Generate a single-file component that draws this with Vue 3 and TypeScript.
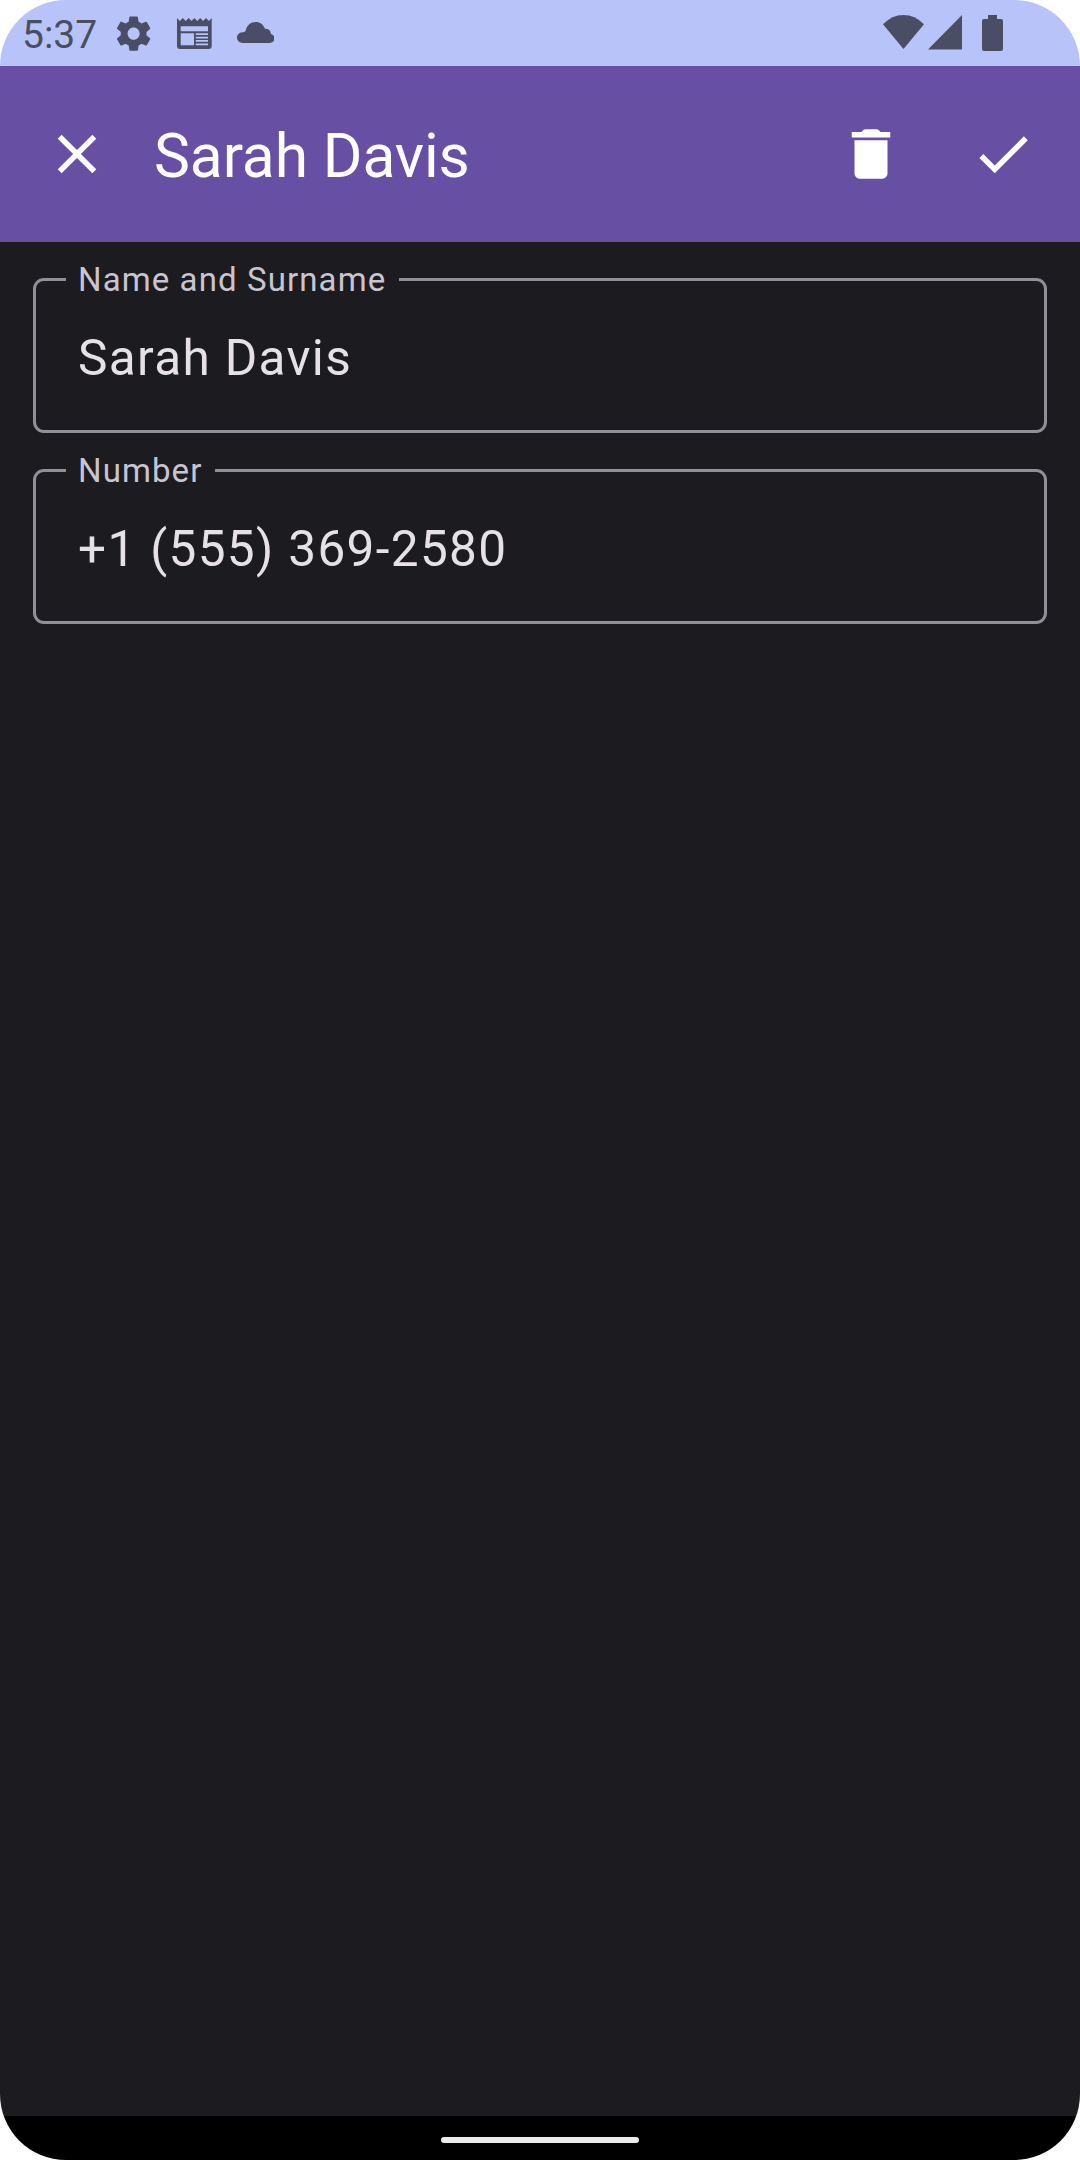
<script setup lang="ts">
import { ref } from 'vue'

interface Field {
  id: string
  label: string
  value: string
}

const title = ref('Sarah Davis')
const fields = ref<Field[]>([
  { id: 'name', label: 'Name and Surname', value: 'Sarah Davis' },
  { id: 'number', label: 'Number', value: '+1 (555) 369-2580' },
])
</script>

<template>
  <div class="screen">
    <header class="status">
      <span class="clock">5:37</span>
      <svg class="gear" viewBox="0 0 24 24" aria-hidden="true">
        <path d="M19.43 12.98c.04-.32.07-.64.07-.98s-.03-.66-.07-.98l2.11-1.65c.19-.15.24-.42.12-.64l-2-3.46c-.12-.22-.39-.3-.61-.22l-2.49 1c-.52-.4-1.08-.73-1.69-.98l-.38-2.65C14.46 2.18 14.25 2 14 2h-4c-.25 0-.46.18-.49.42l-.38 2.65c-.61.25-1.17.59-1.69.98l-2.49-1c-.23-.09-.49 0-.61.22l-2 3.46c-.13.22-.07.49.12.64l2.11 1.65c-.04.32-.07.65-.07.98s.03.66.07.98l-2.11 1.65c-.19.15-.24.42-.12.64l2 3.46c.12.22.39.3.61.22l2.49-1c.52.4 1.08.73 1.69.98l.38 2.65c.03.24.24.42.49.42h4c.25 0 .46-.18.49-.42l.38-2.65c.61-.25 1.17-.59 1.69-.98l2.49 1c.23.09.49 0 .61-.22l2-3.46c.12-.22.07-.49-.12-.64l-2.11-1.65zM12 15.5c-1.93 0-3.5-1.57-3.5-3.5s1.57-3.5 3.5-3.5 3.5 1.57 3.5 3.5-1.57 3.5-3.5 3.5z" />
      </svg>
      <svg class="news" viewBox="0 0 35 32" aria-hidden="true">
        <path fill-rule="evenodd" d="M0 0L2.9 3L5.8 0L8.7 3L11.6 0L14.5 3L17.4 0L20.3 3L23.2 0L26.1 3L29 0L31.9 3L34.7 0V28a3 3 0 0 1-3 3H3a3 3 0 0 1-3-3zM3.7 8.3V13.3H31V8.3zM3.7 15.3V27.3H17V15.3zM18.8 15.3V17H31V15.3zM18.8 18.7V20.4H31V18.7zM18.8 22.1V23.8H31V22.1zM18.8 25.6V27.3H31V25.6z" />
      </svg>
      <svg class="cloud" viewBox="0 4 24 13.5" preserveAspectRatio="none" aria-hidden="true">
        <path d="M19.9 8.7C19.5 8.4 18.6 8.25 17.9 8.3C16.9 5.7 14.7 4 12 4C8.8 4 6.2 6.2 5.5 9.6C5.2 10.25 4.5 10.5 3.4 10.6C1.5 10.8 0 12.2 0 14C0 16 1.6 17.5 3.6 17.5H20.8C22.6 17.5 24 16.2 24 14.6C24 13.1 23 12 21.6 11.7C21.7 10.3 21 9.2 19.9 8.7z" />
      </svg>
      <span class="spacer"></span>
      <svg class="wifi" viewBox="0 0 41 34" aria-hidden="true">
        <path d="M0 9.3Q9 0 20.5 0T41 9.3L20.5 34z" />
      </svg>
      <svg class="signal" viewBox="0 0 34 35" aria-hidden="true">
        <path d="M34 0V34.5H0z" />
      </svg>
      <svg class="battery" viewBox="0 0 21 36" aria-hidden="true">
        <path d="M6 0h9v4h4a2 2 0 0 1 2 2v28a2 2 0 0 1-2 2H2a2 2 0 0 1-2-2V6a2 2 0 0 1 2-2h4z" />
      </svg>
    </header>

    <nav class="appbar">
      <button class="icon-button" type="button" aria-label="Close">
        <svg viewBox="0 0 24 24"><path d="M19 6.41L17.59 5 12 10.59 6.41 5 5 6.41 10.59 12 5 17.59 6.41 19 12 13.41 17.59 19 19 17.59 13.41 12z" /></svg>
      </button>
      <h1 class="title">{{ title }}</h1>
      <button class="icon-button" type="button" aria-label="Delete">
        <svg viewBox="0 0 24 24"><path d="M6 19c0 1.1.9 2 2 2h8c1.1 0 2-.9 2-2V7H6v12zM19 4h-3.5l-.71-.71c-.18-.18-.44-.29-.7-.29H9.91c-.26 0-.52.11-.7.29L8.5 4H5v2h14V4z" /></svg>
      </button>
      <button class="icon-button" type="button" aria-label="Save">
        <svg viewBox="0 0 24 24"><path d="M9 16.17L4.83 12l-1.42 1.41L9 19 21 7l-1.41-1.41z" /></svg>
      </button>
    </nav>

    <main class="form">
      <div v-for="field in fields" :key="field.id" class="field">
        <span class="label">{{ field.label }}</span>
        <span class="value">{{ field.value }}</span>
      </div>
    </main>

    <footer class="gesture"><span class="handle"></span></footer>
  </div>
</template>

<style>
body {
  margin: 0;
  background: #ffffff;
}
</style>

<style scoped>
.screen {
  display: flex;
  flex-direction: column;
  box-sizing: border-box;
  width: 1080px;
  height: 2160px;
  overflow: hidden;
  border-radius: 66px;
  font-family: Roboto, sans-serif;
}

svg {
  display: block;
  flex: none;
  fill: currentColor;
}

.status {
  display: flex;
  flex: none;
  align-items: flex-start;
  height: 66px;
  padding: 0 77px 0 22px;
  box-sizing: border-box;
  background: #b8c4f9;
  color: #4a4e64;
}

.clock {
  width: 90.5px;
  font-size: 39px;
  line-height: 46px;
  margin-top: 12px;
}

.gear {
  width: 41.25px;
  height: 41.25px;
  margin-top: 12.7px;
}

.news {
  width: 35px;
  height: 32px;
  margin: 18px 0 0 23.25px;
}

.cloud {
  width: 37.5px;
  height: 21px;
  margin: 21.5px 0 0 24.5px;
}

.spacer {
  flex: 1;
}

.wifi {
  width: 41px;
  height: 34px;
  margin-top: 15px;
}

.signal {
  width: 34px;
  height: 35px;
  margin: 15px 0 0 4px;
}

.battery {
  width: 21px;
  height: 36px;
  margin: 15px 0 0 20px;
}

.appbar {
  display: flex;
  flex: none;
  align-items: center;
  height: 176px;
  padding: 0 11px;
  box-sizing: border-box;
  background: #6750a4;
  color: #ffffff;
}

.icon-button {
  display: flex;
  align-items: center;
  justify-content: center;
  width: 132px;
  height: 132px;
  padding: 0;
  border: 0;
  background: none;
  color: inherit;
}

.icon-button svg {
  width: 66px;
  height: 66px;
}

.title {
  flex: 1;
  margin: 0 0 0 11px;
  padding-top: 4px;
  font-size: 60.5px;
  font-weight: 400;
  line-height: 77px;
  letter-spacing: -0.1px;
}

.form {
  display: flex;
  flex: 1;
  flex-direction: column;
  gap: 36px;
  padding: 36px 33px 0;
  background: #1c1b1f;
}

.field {
  position: relative;
  display: flex;
  align-items: center;
  box-sizing: border-box;
  height: 155px;
  padding: 4px 42px 0;
  border: 3px solid #928f99;
  border-radius: 11px;
}

.label {
  position: absolute;
  top: -23px;
  left: 30px;
  padding: 0 12.5px 0 12px;
  background: #1c1b1f;
  color: #c8c4d0;
  font-size: 33px;
  line-height: 44px;
  letter-spacing: 1.1px;
  white-space: nowrap;
}

.value {
  color: #e5e1e6;
  font-size: 49.5px;
  line-height: 66px;
  letter-spacing: 1.35px;
  white-space: nowrap;
}

.gesture {
  display: flex;
  flex: none;
  align-items: center;
  justify-content: center;
  height: 44px;
  padding-top: 4px;
  box-sizing: border-box;
  background: #000000;
}

.handle {
  width: 198px;
  height: 6px;
  border-radius: 3px;
  background: #ebebeb;
}
</style>
